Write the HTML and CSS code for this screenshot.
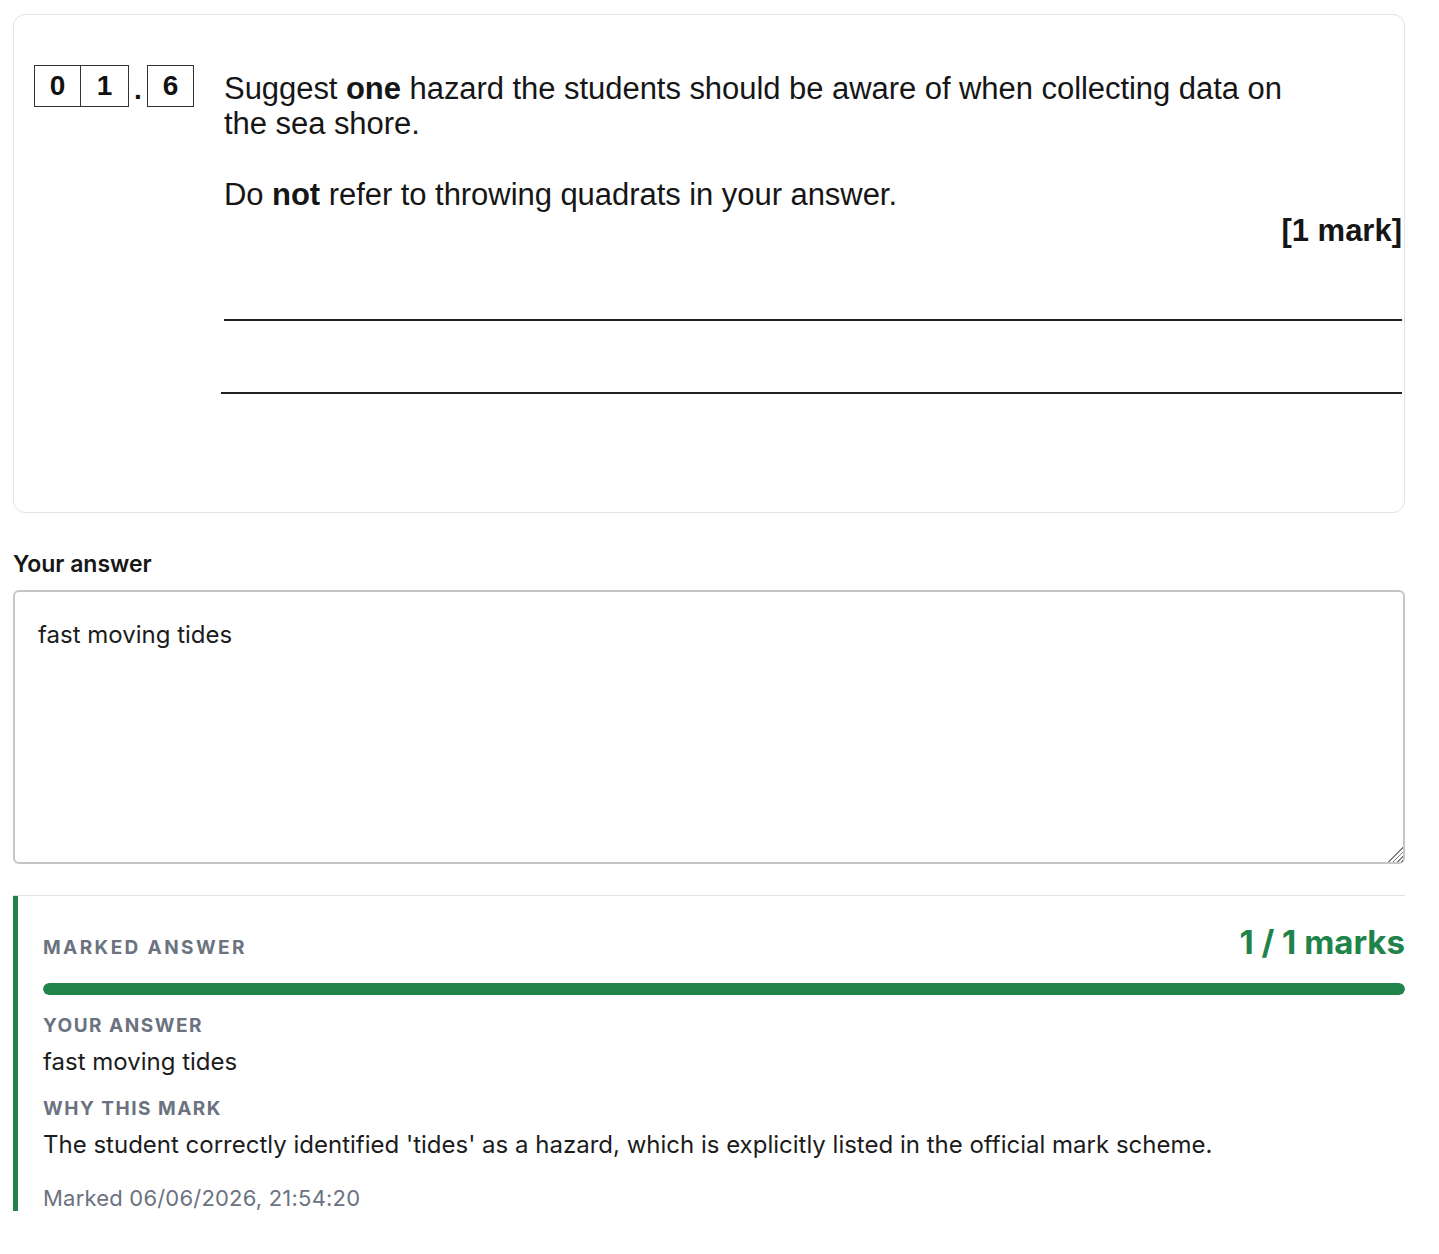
FILE: index.html
```html
<!DOCTYPE html>
<html lang="en">
<head>
<meta charset="utf-8">
<title>Question 01.6</title>
<link rel="stylesheet" href="styles.css">
</head>
<body>
<div class="page">
  <div class="question-card">
    <div class="q-row">
      <div class="qnum">
        <span class="box b0">0</span><span class="box b1">1</span><span class="dot">.</span><span class="box b2">6</span>
      </div>
      <div class="q-body">
        <p class="q-text">Suggest <b>one</b> hazard the students should be aware of when collecting data on<br>the sea shore.</p>
        <p class="q-text">Do <b>not</b> refer to throwing quadrats in your answer.</p>
        <p class="mark">[1 mark]</p>
        <div class="ans-line l1"></div>
        <div class="ans-line l2"></div>
      </div>
    </div>
  </div>

  <label class="answer-label" for="answer">Your answer</label>
  <textarea id="answer" class="answer-box">fast moving tides</textarea>

  <hr class="sep">

  <section class="marked">
    <div class="marked-head">
      <span class="label head">Marked answer</span>
      <span class="score">1 / 1 marks</span>
    </div>
    <div class="bar"><div class="bar-fill" style="width:100%"></div></div>
    <div class="label sub">Your answer</div>
    <p class="value">fast moving tides</p>
    <div class="label sub">Why this mark</div>
    <p class="value">The student correctly identified 'tides' as a hazard, which is explicitly listed in the official mark scheme.</p>
    <p class="stamp">Marked 06/06/2026, 21:54:20</p>
  </section>
</div>
</body>
</html>
```

FILE: styles.css
```css
* { box-sizing: border-box; }
html, body { margin: 0; padding: 0; background: #fff; }
body { font-family: Inter, "Noto Sans", sans-serif; color: #1c1c1c; }

.page {
  width: 1392px;
  margin-left: 13px;
  padding-top: 14px;
}

.question-card {
  border: 1px solid #e3e3e3;
  border-radius: 12px;
  height: 499px;
  padding: 50px 2px 0 20px;
}

.q-row { display: flex; }

.qnum {
  display: flex;
  align-items: flex-start;
  width: 190px;
  flex: none;
  font-family: "Liberation Sans", Arial, sans-serif;
  font-weight: bold;
  font-size: 28px;
  color: #111;
}
.box {
  display: flex;
  align-items: center;
  justify-content: center;
  height: 42px;
  border: 1.5px solid #333;
}
.b0 { width: 47px; }
.b1 { width: 48px; border-left: none; }
.b2 { width: 47px; }
.dot { width: 18px; text-align: center; line-height: 50px; height: 42px; }

.q-body {
  flex: 1;
  font-family: "Liberation Sans", Arial, sans-serif;
  color: #161616;
}
.q-text {
  margin: 6px 0 36px;
  font-size: 31px;
  line-height: 35px;
  letter-spacing: -0.05px;
}
.q-text + .q-text { margin: 0; }
.q-text b { font-weight: bold; }
.mark {
  margin: 1px 0 0;
  text-align: right;
  font-weight: bold;
  font-size: 31px;
  line-height: 35px;
}
.ans-line {
  height: 2px;
  background: #222;
}
.l1 { margin-top: 71px; }
.l2 { margin-top: 71px; margin-left: -3px; }

.answer-label {
  display: block;
  margin-top: 37px;
  font-size: 23px;
  font-weight: 600;
  line-height: 28px;
  color: #171717;
}

.answer-box {
  display: block;
  width: 100%;
  height: 274px;
  margin-top: 12px;
  padding: 28px 23px;
  border: 2px solid #c6c6c6;
  border-radius: 6px;
  font-family: Inter, "Noto Sans", sans-serif;
  font-size: 24px;
  line-height: 30px;
  color: #1c1c1c;
  background: #fff;
  resize: vertical;
  outline: none;
}
.answer-box::-webkit-scrollbar { width: 18px; height: 18px; background: transparent; }
.answer-box::-webkit-resizer {
  background:
    linear-gradient(135deg, transparent 0 50%, #7d7d7d 50% 56%, transparent 56% 64%, #7d7d7d 64% 70%, transparent 70% 78%, #7d7d7d 78% 84%, transparent 84% 92%, #7d7d7d 92% 97%, transparent 97%);
}

.sep {
  margin: 31px 0 0;
  border: none;
  border-top: 1px solid #e2e2e2;
  height: 0;
}

.marked {
  border-left: 5px solid #208349;
  padding: 28px 0 0 25px;
  height: 315px;
}

.marked-head {
  display: flex;
  justify-content: space-between;
  align-items: baseline;
}

.label {
  font-size: 19px;
  font-weight: 700;
  text-transform: uppercase;
  color: #6b7280;
  line-height: 22px;
}
.head { letter-spacing: 2.4px; }

.score {
  font-size: 33px;
  font-weight: 700;
  color: #208349;
  line-height: 36px;
}

.bar {
  margin-top: 23px;
  height: 12px;
  border-radius: 6px;
  background: #e5e7eb;
  overflow: hidden;
}
.bar-fill { height: 100%; background: #208349; border-radius: 6px; }

.sub { margin-top: 20px; letter-spacing: 1.5px; }

.value {
  margin: 9px 0 0;
  font-size: 24px;
  line-height: 32px;
  color: #1c1c1c;
}

.stamp {
  margin: 24px 0 0;
  font-size: 22px;
  line-height: 26px;
  letter-spacing: 0.2px;
  color: #6b7280;
}
```
